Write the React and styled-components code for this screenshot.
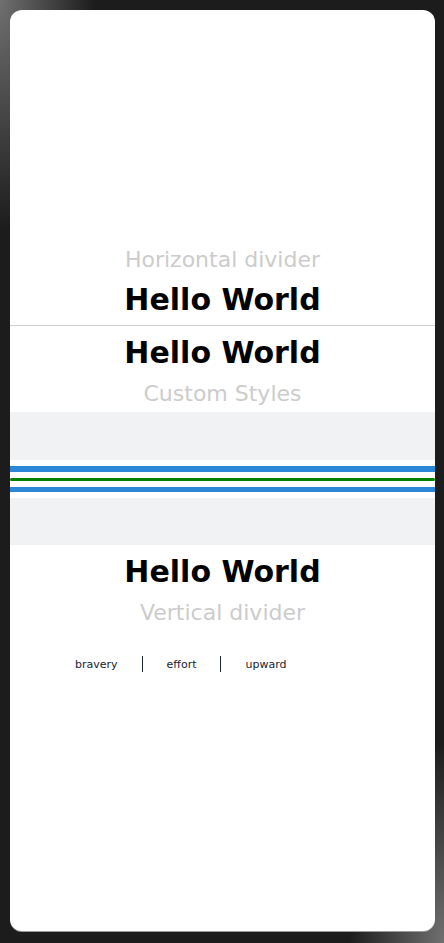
import React from 'react';
import styled, { createGlobalStyle } from 'styled-components';

const GlobalStyle = createGlobalStyle`
  html, body {
    margin: 0;
    padding: 0;
    background: #1c1c1d;
  }
  body {
    font-family: "DejaVu Sans", "Liberation Sans", sans-serif;
  }
`;

const Frame = styled.div`
  width: 444px;
  height: 943px;
  box-sizing: border-box;
  padding: 10px 9px 12px 10px;
  background:
    radial-gradient(ellipse 95px 230px at 0 0, rgba(140, 140, 140, 0.75), rgba(28, 28, 29, 0) 100%),
    radial-gradient(ellipse 95px 200px at 100% 100%, rgba(140, 140, 140, 0.75), rgba(28, 28, 29, 0) 100%),
    #1c1c1d;
`;

const Screen = styled.div`
  height: 100%;
  background: #fff;
  border-radius: 12px;
  overflow: hidden;
  display: flex;
  flex-direction: column;
  padding-top: 235px;
  box-sizing: border-box;
  box-shadow: 0 1px 0 #9a9a9a;
`;

const Caption = styled.div`
  margin-top: ${p => p.$mt || 0}px;
  font-size: 22px;
  line-height: 30px;
  color: #cccccc;
  text-align: center;
`;

const Title = styled.div`
  margin-top: ${p => p.$mt || 0}px;
  font-size: 30px;
  line-height: 40px;
  font-weight: bold;
  color: #000;
  text-align: center;
`;

const HLine = styled.div`
  margin-top: ${p => p.$mt || 0}px;
  height: 1px;
  background: #cfcfcf;
`;

const Band = styled.div`
  margin-top: 3px;
  padding: 48px 0 47px;
  background: #f1f2f4;
`;

const LineBox = styled.div`
  background: #fff;
  padding: 6px 0;
  display: flex;
  flex-direction: column;
  gap: 6px;
`;

const Stroke = styled.div`
  height: ${p => p.$w}px;
  background: ${p => p.$color};
  border-radius: ${p => (p.$round ? p.$w / 2 : 0)}px;
`;

const Row = styled.div`
  margin-top: 28px;
  display: flex;
  align-items: center;
  gap: 24px;
  padding-left: 65px;
  height: 16px;
`;

const Word = styled.span`
  font-size: 11px;
  color: #182431;
`;

const VLine = styled.div`
  width: 1px;
  height: 16px;
  background: #182431;
`;

export default function App() {
  return (
    <>
      <GlobalStyle />
      <Frame>
        <Screen>
          <Caption>Horizontal divider</Caption>
          <Title $mt={5}>Hello World</Title>
          <HLine $mt={5} />
          <Title $mt={7}>Hello World</Title>
          <Caption $mt={6}>Custom Styles</Caption>
          <Band>
            <LineBox>
              <Stroke $w={6} $color="#2b88d8" />
              <Stroke $w={3} $color="#008000" $round />
              <Stroke $w={5} $color="#2b88d8" />
            </LineBox>
          </Band>
          <Title $mt={7}>Hello World</Title>
          <Caption $mt={6}>Vertical divider</Caption>
          <Row>
            <Word>bravery</Word>
            <VLine />
            <Word>effort</Word>
            <VLine />
            <Word>upward</Word>
          </Row>
        </Screen>
      </Frame>
    </>
  );
}
